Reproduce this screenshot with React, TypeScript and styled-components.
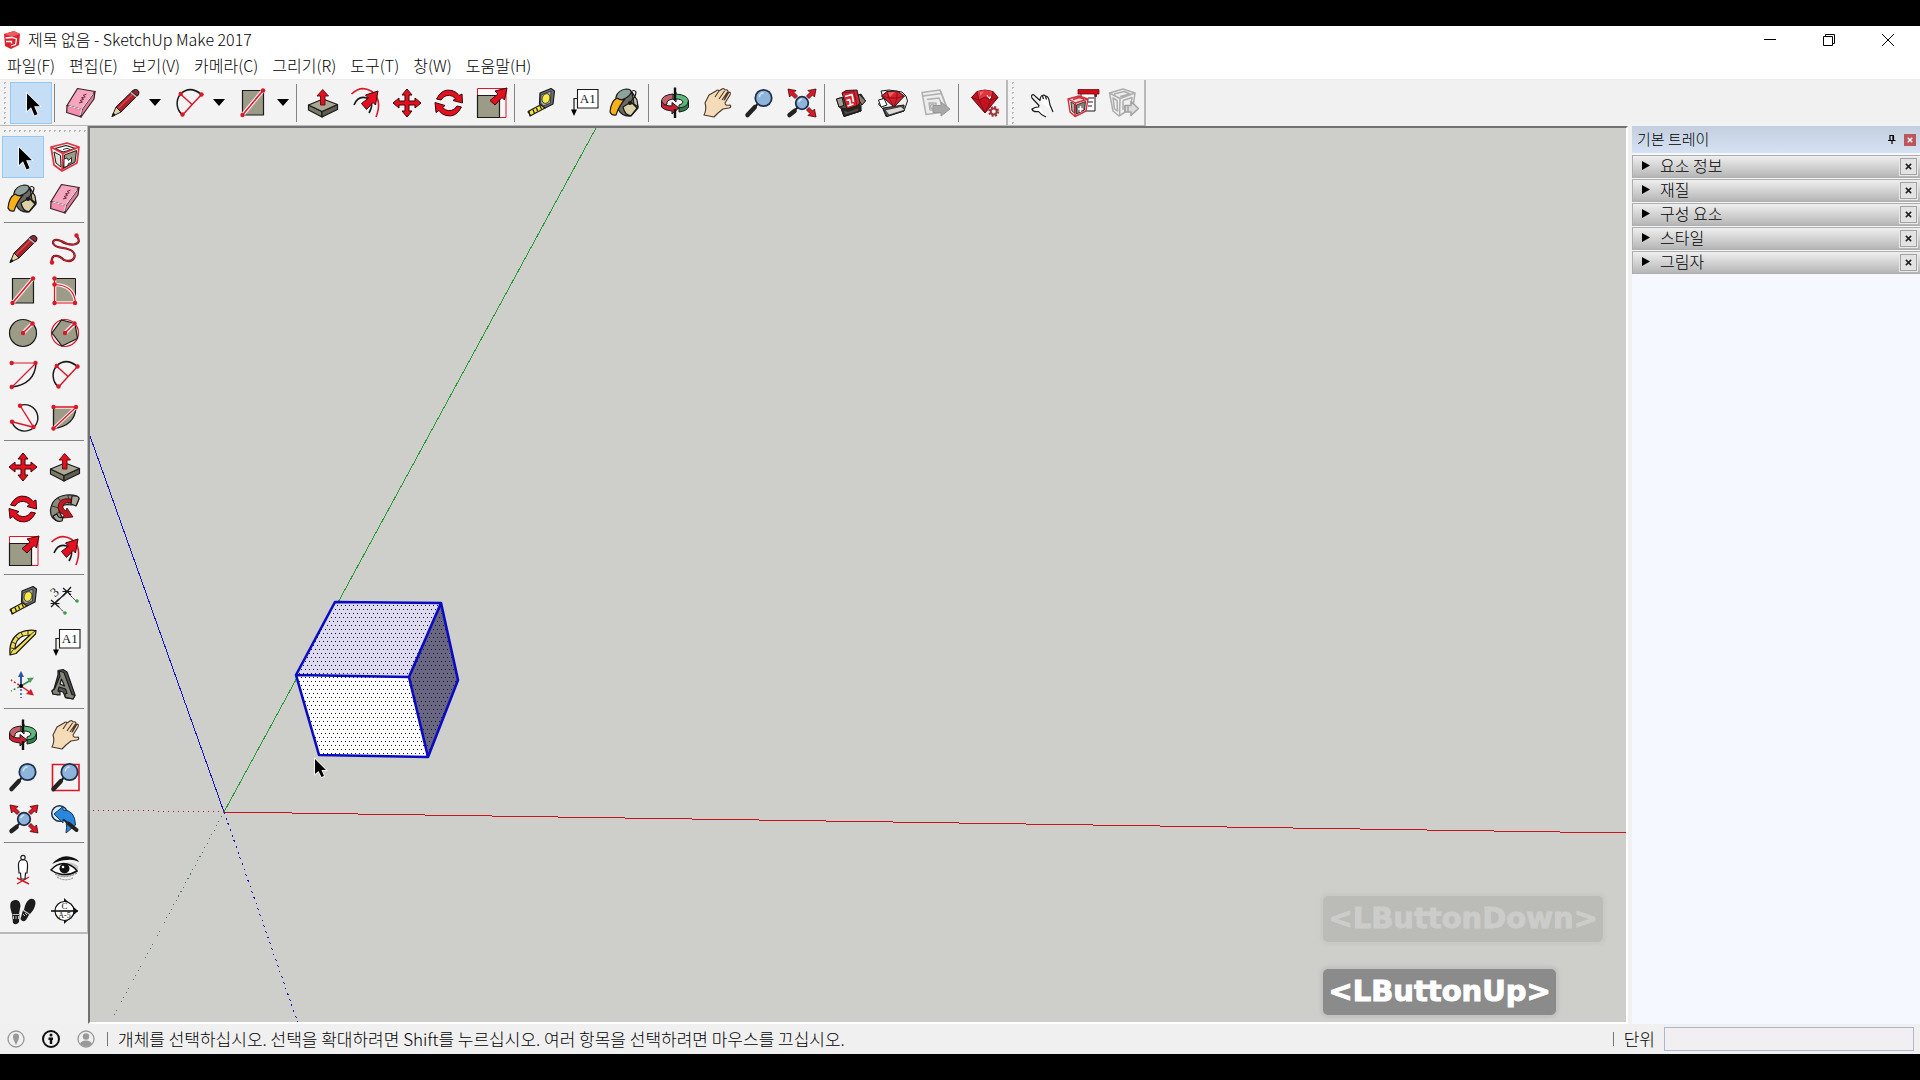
import React from "react";
import styled, { createGlobalStyle, css } from "styled-components";

const GlobalStyle = createGlobalStyle`
  * { box-sizing: border-box; }
  body {
    margin: 0;
    background: #000;
    color: #000;
    font-family: "Noto Sans CJK KR", "Noto Sans", sans-serif;
    font-size: 16px;
    font-weight: 300;
  }
  button, input {
    margin: 0;
    padding: 0;
    border: 0;
    background: none;
    color: inherit;
    font: inherit;
  }
  svg { display: block; }
`;

/* ---------- frame ---------- */

const Screen = styled.div`
  display: flex;
  flex-direction: column;
  height: 100vh;
  padding: 26px 0;
  background: #000;
`;

const Window = styled.div`
  display: flex;
  flex: 1;
  flex-direction: column;
  min-height: 0;
  background: #f1f1f1;
`;

const TitleBar = styled.header`
  display: flex;
  align-items: center;
  height: 28px;
  padding: 0 3px;
  background: #fff;
`;

const Title = styled.h1`
  flex: 1;
  margin: 0;
  padding: 0 0 2px 7px;
  font-size: 16px;
  font-weight: 300;
  line-height: 24px;
`;

const WindowButton = styled.button`
  display: grid;
  place-items: center;
  width: 59px;
  height: 28px;
`;

const MenuBar = styled.nav`
  display: flex;
  align-items: flex-start;
  gap: 14px;
  height: 25px;
  padding-left: 7px;
  background: #fff;
`;

const MenuItem = styled.button`
  line-height: 22px;
  white-space: nowrap;
`;

/* ---------- toolbars ---------- */

const ToolbarRow = styled.div`
  display: flex;
  height: 47px;
  border-top: 1px solid #ececec;
`;

const Toolbar = styled.div`
  display: flex;
  align-items: center;
  border-right: 2px solid #b9b9b9;
  border-bottom: 1px solid #b9b9b9;
  background: #f4f3f4;
`;

const Grip = styled.div<{ $across?: boolean }>`
  ${(p) =>
    p.$across
      ? css`
          height: 8px;
          margin: 0 0 2px 2px;
          background: radial-gradient(circle, #b8b8b8 1px, transparent 1px) 0 2px / 5px 5px repeat-x;
        `
      : css`
          align-self: stretch;
          width: 10px;
          background: radial-gradient(circle, #b8b8b8 1px, transparent 1px) 2px 0 / 5px 5px repeat-y;
        `}
`;

const ToolButton = styled.button<{ $active?: boolean; $split?: boolean }>`
  display: grid;
  place-items: center;
  width: 42px;
  height: 42px;
  padding-left: ${(p) => (p.$split ? 4 : 0)}px;
  border: 1px solid ${(p) => (p.$active ? "#98c8f0" : "transparent")};
  background: ${(p) => (p.$active ? "#c5def5" : "transparent")};
`;

const DropButton = styled.button`
  display: grid;
  place-items: center;
  width: 22px;
  height: 42px;
`;

const Divider = styled.div<{ $across?: boolean }>`
  flex: none;
  background: #858585;
  ${(p) =>
    p.$across
      ? css`
          grid-column: 1 / -1;
          height: 1px;
          margin: 2px 2px 5px;
        `
      : css`
          width: 1px;
          height: 38px;
          margin: 0 5px 0 2px;
        `}
`;

const Workspace = styled.div`
  display: flex;
  flex: 1;
  min-height: 0;
`;

const SideColumn = styled.aside`
  width: 88px;
  flex: none;
`;

const Palette = styled.div`
  border-right: 1px solid #b9b9b9;
  border-bottom: 2px solid #b9b9b9;
  background: #f4f3f4;
`;

const PaletteGrid = styled.div`
  display: grid;
  grid-template-columns: 42px 42px;
  padding-left: 2px;
`;

/* ---------- drawing area ---------- */

const Viewport = styled.main`
  position: relative;
  flex: 1;
  min-width: 0;
  overflow: hidden;
  border: 2px solid;
  border-color: #717171 #fff #fff #717171;
  background: #cececa;
`;

const Scene = styled.svg`
  position: absolute;
  inset: 0;
  width: 100%;
  height: 100%;
`;

const KeyStack = styled.div`
  position: absolute;
  right: 23px;
  bottom: 7px;
  display: flex;
  flex-direction: column;
  align-items: flex-start;
  gap: 27px;
`;

const KeyBadge = styled.div<{ $faded?: boolean }>`
  padding: 0 5px 2px;
  border-radius: 5px;
  background: ${(p) => (p.$faded ? "#bbbbb8" : "#8b8b8b")};
  box-shadow: 0 0 3px 3px ${(p) => (p.$faded ? "#c8c8c6" : "#c2c2c1")};
  color: ${(p) => (p.$faded ? "#cccccb" : "#fff")};
  font-family: "DejaVu Sans", sans-serif;
  font-size: 29px;
  font-weight: 700;
  line-height: 44px;
  white-space: nowrap;
  -webkit-text-stroke: 1px currentColor;
`;

/* ---------- tray ---------- */

const Tray = styled.aside`
  display: flex;
  flex: none;
  flex-direction: column;
  width: 288px;
  margin-left: 4px;
  background: #f5f8ff;
`;

const TrayHeader = styled.div`
  display: flex;
  align-items: center;
  height: 27px;
  margin-bottom: 2px;
  padding: 0 4px 0 5px;
  background: linear-gradient(#c3cfde, #d6e2f3);
`;

const TrayTitle = styled.h2`
  flex: 1;
  margin: 0;
  padding-bottom: 2px;
  font-size: 15px;
  font-weight: 300;
  line-height: 22px;
`;

const PinButton = styled.button`
  margin-right: 8px;
`;

const TrayClose = styled.button`
  display: grid;
  place-items: center;
  width: 12px;
  height: 12px;
  background: #bd565b;
`;

const PanelRow = styled.div`
  display: flex;
  align-items: center;
  height: 23px;
  margin-bottom: 1px;
  padding-right: 3px;
  border: 1px solid #adadad;
  border-right: 0;
  background: linear-gradient(#efefef, #b6b6b6);
`;

const PanelToggle = styled.button`
  display: flex;
  flex: 1;
  align-items: center;
  gap: 10px;
  padding: 0 0 2px 9px;
  line-height: 19px;
  text-align: left;
`;

const PanelClose = styled.button`
  display: grid;
  place-items: center;
  width: 17px;
  height: 17px;
  border: 1px solid #a3a3a3;
  outline: 1px solid #e9e9e9;
  background: #e3e3e3;
`;

/* ---------- status bar ---------- */

const StatusBar = styled.footer`
  display: flex;
  align-items: center;
  height: 30px;
  padding: 0 6px 0 7px;
  background: #f1f0f1;
`;

const StatusIcons = styled.div`
  display: flex;
  gap: 17px;
`;

const Bar = styled.span`
  width: 1px;
  height: 14px;
  margin: 0 10px 0 12px;
  background: #777;
`;

const Hint = styled.p`
  flex: 1;
  margin: 0;
  font-size: 17px;
  line-height: 24px;
  white-space: nowrap;
`;

const UnitLabel = styled.label`
  display: flex;
  align-items: center;
  gap: 9px;
  font-size: 17px;
  line-height: 24px;
`;

const UnitInput = styled.input`
  width: 250px;
  height: 24px;
  border: 1px solid #acb6cc;
  background: #f1eff1;
`;

/* ---------- icons, all on a 32 unit grid ---------- */

const K = "#1a1a1a";
const R = "#d71928";
const STONE = "#9c9b88";

const Dot = ({ x, y }: { x: number; y: number }) => <circle cx={x} cy={y} r="2.2" fill={R} />;

const Lens = ({ x, y, r }: { x: number; y: number; r: number }) => (
  <>
    <path d={`M${x - r * 0.7} ${y + r * 0.7}L4.500 28`} stroke={K} strokeWidth="2" />
    <path d={`M${x - r * 0.7 - 3} ${y + r * 0.7 + 3.500}L4.500 28`} stroke="#222" strokeWidth="4.500" strokeLinecap="round" />
    <circle cx={x} cy={y} r={r} fill="#8fb4dc" stroke="#20304a" strokeWidth="1.800" />
    <path d={`M${x - r * 0.5} ${y - r * 0.1}a${r * 0.5} ${r * 0.5} 0 0 1 ${r * 0.5} ${-r * 0.5}`} stroke="#d3e5fa" fill="none" strokeWidth="1.500" />
  </>
);

const BigArrow = () => (
  <path d="M15.500 12.500L22.500 7L19.500 4L32 0L29.500 14L27 11.500L20.500 18.500Z" fill="#e3101f" stroke="#3a0508" strokeWidth="1" />
);

const icons: Record<string, React.ReactNode> = {
  select: <path d="M12 6.500V24L16 20.200L19.500 28.500L22.600 27.200L19.200 19.200H25Z" fill="#000" stroke="#fff" strokeWidth="1.500" paintOrder="stroke" />,
  component: (
    <g strokeLinejoin="round">
      <path d="M2 6L18 2L30 6L28 22L13 30L5 24Z" fill="#f0eceb" />
      <path d="M15.500 14L27.500 9.500L26 21L14.500 27.500Z" fill={STONE} stroke={K} />
      <path d="M6 7.500L17 4.500L26.500 7.500L14 11Z" fill="#fff" stroke={K} strokeWidth="1.200" />
      <path d="M5 11L11.500 14.500L12 26L7 22Z" fill="#e6e2d8" stroke={K} />
      <path d="M14 8.500l4-1.200 3 1.200M15 18l3-1 1.500 2.500 3-3v5l-3 1-1 2.500-3.500 1.500Z" fill="#fff" stroke={K} strokeWidth=".9" />
      <path d="M2 6L18 2L30 6L28 22L13 30L5 24ZM2 6L14 12.500L30 6M14 12.500L13 30" fill="none" stroke="#e0323f" strokeWidth="1.700" />
    </g>
  ),
  paint: (
    <g stroke={K} strokeWidth="1.200" strokeLinejoin="round">
      <path d="M9 9L20 3Q29 12 29 21L22 29Q13 30 9 22Z" fill="#6a6a63" />
      <path d="M14 20L22 15L28 21L22 28.500Q16 29 14 20Z" fill="#ddd1a8" />
      <path d="M23 5L28 13L29 20L25 17Z" fill="#c9c3a4" />
      <path d="M7 10Q9 3 17 2Q23 2 22 6Q19 12 10 13Q6 13 7 10Z" fill="#8ea19c" />
      <path d="M8 11Q2 14 1 25Q3 29 7 28Q10 19 16 12Q12 14 8 11Z" fill="#f8b11a" />
      <path d="M20 16Q27 10 27 5Q25 2 22 5" fill="none" />
      <circle cx="21" cy="16" r="1.500" fill={K} />
    </g>
  ),
  eraser: (
    <g stroke="#3c2027" strokeWidth="1.200" strokeLinejoin="round">
      <path d="M12.500 1.500L30 4.500L17 22.500L2 18.500Z" fill="#f6a6bf" />
      <path d="M2 18.500L17 22.500L16 30L1.700 25.500Z" fill="#f490ae" />
      <path d="M17 22.500L30 4.500L29 12L16 30Z" fill="#e57f9f" />
      <path d="M3.500 19L16.500 22.300L28 6.500M16.500 22.500L15.700 28" fill="none" stroke="#fff" strokeWidth=".9" />
      <path d="M14 16l3.500-1-2.500-1.500 3.800-1.200-2.300-1.500 3.800-1-2-1.600 3.200-1" fill="none" stroke="#6b2a3f" strokeWidth="1" />
    </g>
  ),
  pencil: (
    <g stroke={K} strokeWidth="1" strokeLinejoin="round">
      <path d="M7 20L24 3.500Q28 2 29.500 5L29 8L12 25Z" fill="#a5222a" />
      <path d="M9 21.500L25.500 5.500" stroke="#d84a4c" strokeWidth="1.300" />
      <path d="M22.500 5L24.500 3Q28.500 1.500 30 5Q30.200 7 28.500 9Z" fill="#8b2a33" />
      <path d="M22 5.500L27.500 10" stroke="#b9b9b9" strokeWidth="1.600" />
      <path d="M7 20L12 25L3 29.500Z" fill="#e5d3a3" />
      <path d="M4.500 26L6 28L3 29.500Z" fill={K} />
    </g>
  ),
  freehand: (
    <>
      <path d="M27.700 3Q33 10 25 11.500Q18 12 12 8Q4 5 4 10Q5 14 14 15Q27 17 25.500 24Q23 30 15 27Q10 22 5 23Q2 25 3 29" fill="none" stroke="#7b1018" strokeWidth="2.200" />
      <path d="M27.700 3Q33 10 25 11.500Q18 12 12 8Q4 5 4 10Q5 14 14 15Q27 17 25.500 24Q23 30 15 27Q10 22 5 23Q2 25 3 29" fill="none" stroke="#d9313c" strokeWidth=".8" />
      <Dot x={27.500} y={2.500} /><Dot x={3} y={29.500} />
    </>
  ),
  rect: (
    <>
      <path d="M5.500 3.500H26.500V28H5.500Z" fill={STONE} stroke={K} strokeWidth="1.200" />
      <path d="M5.500 28L26 3.500" stroke="#fbe9e9" strokeWidth="4" /><path d="M5.500 28L26 3.500" stroke={R} strokeWidth="1.500" />
      <Dot x={5.500} y={28} /><Dot x={26} y={3.500} />
    </>
  ),
  rotrect: (
    <>
      <path d="M5.500 3.500H26.500V28H5.500Z" fill={STONE} stroke={K} strokeWidth="1" />
      <path d="M5.500 3.500V28H26.500Q25 10 5.500 9.500" fill="none" stroke="#fbe9e9" strokeWidth="3.500" />
      <path d="M5.500 3.500V28H26.500Q25 10 5.500 9.500" fill="none" stroke={R} strokeWidth="1.200" />
      <Dot x={5.500} y={3.500} /><Dot x={5.500} y={9.500} /><Dot x={5.500} y={28} /><Dot x={26} y={28} />
    </>
  ),
  circle: (
    <>
      <circle cx="16" cy="16" r="13.500" fill={STONE} stroke={K} strokeWidth="1.200" />
      <path d="M16 16L25.500 6.500" stroke="#fbe9e9" strokeWidth="4" /><path d="M16 16L25.500 6.500" stroke={R} strokeWidth="1.500" />
      <Dot x={16} y={16} /><Dot x={25.500} y={6.500} />
    </>
  ),
  polygon: (
    <>
      <circle cx="16" cy="16" r="13.500" fill="#f8eeee" stroke={R} strokeWidth="1.200" />
      <path d="M12.500 3L26 6.500L28.500 21.500L13 29L3 16Z" fill={STONE} stroke={K} strokeWidth="1.200" />
      <path d="M16 16L25.500 6.500" stroke="#fbe9e9" strokeWidth="4" /><path d="M16 16L25.500 6.500" stroke={R} strokeWidth="1.500" />
      <Dot x={16} y={16} /><Dot x={25.500} y={6.500} />
    </>
  ),
  arc: (
    <>
      <path d="M29 4Q28 25 5 28" fill="none" stroke={K} strokeWidth="1.500" />
      <path d="M5 4H29L5 28" fill="none" stroke={R} strokeWidth="1.200" />
      <Dot x={4.700} y={4} /><Dot x={28.500} y={4} /><Dot x={4.700} y={28} />
    </>
  ),
  arc2: (
    <>
      <path d="M9.500 28A15 15 0 0 1 7.500 7Q17 -2 28.500 7.500" fill="none" stroke={K} strokeWidth="1.500" />
      <path d="M28.500 7.500L9.500 28M7.500 7L19 17.500" fill="none" stroke={R} strokeWidth="1.500" />
      <Dot x={7.700} y={7} /><Dot x={28.500} y={7.500} /><Dot x={9.500} y={27.500} />
    </>
  ),
  arc3: (
    <>
      <path d="M13 4.500A13.200 13.200 0 1 1 5 20.700" fill="none" stroke={K} strokeWidth="1.400" />
      <path d="M13 4.500L26.700 26.300L5 20.700" fill="none" stroke={R} strokeWidth="1.400" />
      <Dot x={13} y={4.700} /><Dot x={5} y={20.700} /><Dot x={26.500} y={26} />
    </>
  ),
  pie: (
    <>
      <path d="M4.500 6H27Q26 25 4.500 27.500Z" fill={STONE} stroke={K} strokeWidth="1.300" />
      <path d="M4.500 27.500L27.300 6H4.500" fill="none" stroke="#fbe9e9" strokeWidth="3.500" />
      <path d="M4.500 27.500L27.300 6H4.500" fill="none" stroke={R} strokeWidth="1.300" />
      <Dot x={4.500} y={6} /><Dot x={27} y={6} /><Dot x={4.500} y={27.500} />
    </>
  ),
  move: (
    <path d="M16 2L21 8H18V14H24V11L30 16L24 21V18H18V24H21L16 30L11 24H14V18H8V21L2 16L8 11V14H14V8H11Z" fill="#e3101f" stroke="#3a0508" strokeWidth="1" />
  ),
  pushpull: (
    <g strokeLinejoin="round" stroke={K} strokeWidth="1.200">
      <path d="M1.500 18L15 24.500V30L1.500 23Z" fill="#7c7b6a" />
      <path d="M15 24.500L30.500 17.500V22.500L15 30Z" fill="#5f5e51" />
      <path d="M1.500 18L16 12L30.500 17.500L15 24.500Z" fill="#a9a894" />
      <path d="M13.500 18V9H10L15.700 2.500L21.500 9H18V18Z" fill="#e3101f" stroke="#5a0a0e" strokeWidth=".9" />
    </g>
  ),
  rotate: (
    <g fill="#e3101f" stroke="#3a0508" strokeWidth="1">
      <path d="M3.500 12Q9 1 19 3.500Q24 5 26 8.500L29 7L29.500 16L20 13.500L22.500 11.500Q17 6 10.500 10L8 13Z" />
      <path d="M28.500 20Q23 31 13 28.500Q8 27 6 23.500L3 25.500L2 15.500L12 18.500L9.500 20.500Q15 26 21.500 22L24 19Z" />
    </g>
  ),
  followme: (
    <g stroke={K} strokeWidth="1.200" strokeLinejoin="round">
      <path d="M10 28Q1 27 1.500 17Q3 4 17 2Q27 1 30 5L28 11L22 12Q12 10 10 18L13 24Z" fill="#8b8a7d" />
      <path d="M4 23L10 19M3 13L10 15M9 5L14 11M19 2L20 11" strokeWidth=".8" />
      <path d="M23 3Q30 2 30 6L27 13L22 11Z" fill="#aaa99a" />
      <path d="M22 6Q9 4 9 15Q10 20 15 22L14 25L24 24L18 15L17 18Q12 15 15 11Q18 8 22 10Z" fill="#c01822" stroke="#4a0508" strokeWidth=".8" />
      <path d="M4 23Q7 30 13 28L14 24Q9 26 8 21Z" fill="#aaa99a" />
    </g>
  ),
  scale: (
    <>
      <path d="M2.500 1.500H31V30.500H2.500Z" fill="#fdf7f7" stroke={R} strokeWidth="1" />
      <path d="M2.500 8.500H24.500V30.500H2.500Z" fill={STONE} stroke={K} strokeWidth="1.200" />
      <path d="M15 13.500L23 7L20 4L32 1L29.500 13L27 10.500L20 18Z" fill="#e3101f" stroke="#3a0508" strokeWidth="1" />
    </>
  ),
  offset: (
    <>
      <path d="M2.500 7Q12 -2 22 4Q34 12 27 30" fill="none" stroke={R} strokeWidth="1.600" />
      <path d="M5 18Q9 8 18 11Q26 16 20 26" fill="none" stroke={K} strokeWidth="1.600" />
      <g transform="translate(-3 4)"><BigArrow /></g>
    </>
  ),
  tape: (
    <g stroke={K} strokeWidth="1.200" strokeLinejoin="round">
      <path d="M4 24L17 17L20 21L5 29Z" fill="#f6e43a" />
      <path d="M8 22.500l1.500 4M11.500 21l1 3M15 19l1.500 3M4 24l-1 1 3 4" />
      <path d="M15 6L26 1.500L29.500 4L28 17L20 21L14.500 17Z" fill="#6f6f72" />
      <path d="M16 8L26 4L25.500 16L18.500 19L15.500 16Z" fill="#a7a7a5" strokeWidth=".7" />
      <ellipse cx="21" cy="11.500" rx="3.800" ry="5" fill="#f7ec45" transform="rotate(20 21 11.500)" strokeWidth=".7" />
    </g>
  ),
  dimension: (
    <>
      <path d="M6 18L18 7" stroke={K} strokeWidth="1.200" />
      <path d="M2 15L10 22M10 14L2 22M14 3L22 10M22 2L14 11" stroke={K} strokeWidth="1.300" />
      <path d="M1.500 18.500H10.500M13.500 6.500H22.500" stroke={K} strokeWidth="1" />
      <path d="M8 20L15.500 28M20 9L27 16" stroke={K} strokeWidth="1" strokeDasharray="2 1" />
      <circle cx="16" cy="28" r="1.800" fill="#3ba146" /><circle cx="28" cy="16" r="1.800" fill="#3ba146" />
      <text x="4" y="11" fontFamily="Liberation Serif, serif" fontSize="13" transform="rotate(-42 7 9)" fill={K}>3</text>
    </>
  ),
  protractor: (
    <g stroke={K} strokeWidth="1.200" strokeLinejoin="round">
      <path d="M3 28Q1.500 13 12 6Q20 2 29 3.500L28.500 7L9 26.500Z" fill="#f2df57" />
      <path d="M8 22Q8 13 15 9.500Q19 8 23 8Z" fill="#f4f3f4" />
      <path d="M3.500 21l4 .5M5 15l4 2M9 9.500l3 3M14 5.500l2 3.500M21 4v3.500" strokeWidth=".9" />
      <path d="M3 28L5 24L26 5.500L29 3.500" fill="none" strokeWidth=".8" />
    </g>
  ),
  text: (
    <>
      <path d="M10.500 2.500H31V21H10.500Z" fill="#fff" stroke={K} strokeWidth="1.100" />
      <text x="20.700" y="16" textAnchor="middle" fontFamily="Liberation Serif, serif" fontSize="13" fontWeight="400" fill={K}>A1</text>
      <path d="M10 11.500H7V24" fill="none" stroke={K} strokeWidth="1.200" /><path d="M4 22.500H10L7 29Z" fill="#000" />
    </>
  ),
  axes: (
    <>
      <path d="M14 17V6" stroke="#2855a5" strokeWidth="2" /><path d="M11 8L14 2L17 8Z" fill="#2855a5" />
      <path d="M14 17L24 11" stroke="#388a46" strokeWidth="1.500" /><path d="M20 9L27 8.500L23 14Z" fill="#4b9c55" />
      <path d="M14 17L24 24" stroke={R} strokeWidth="1.500" /><path d="M24 20L27 26.500L19 25Z" fill={R} />
      <path d="M14 20V29" stroke="#2855a5" strokeWidth="1.500" strokeDasharray="2 2" />
      <path d="M12 18L4 22" stroke="#388a46" strokeWidth="1.500" strokeDasharray="2 2" />
      <path d="M12 16L4 11" stroke={R} strokeWidth="1.500" strokeDasharray="2 2" />
      <circle cx="14" cy="17" r="2" fill="#000" />
    </>
  ),
  text3d: (
    <g stroke={K} strokeWidth="1.200" strokeLinejoin="round">
      <path d="M9 1.500L14 .5L18 3L26 26L24 30L17 29L14 23L10 22L9 26L4 25L3 22L5 20L9 6Z" fill="#55564f" />
      <path d="M10 2L15 3.500L23 25.500L26 26.500L24 30L16 28V25L18 24.500L16.500 20L10 18L9 22L11 23V26L4 25L3 22L5.500 20L11 7Z" fill="#85867b" />
      <path d="M12.500 10L15.500 17L11 15Z" fill="#f4f3f4" />
    </g>
  ),
  orbit: (
    <g stroke={K} strokeWidth="1" strokeLinejoin="round">
      <path d="M17 7Q29 8 29.500 14Q29 21 20 22L20 18Q24 17 24 15Q23 12 17 12L17 15L12 10L17 5Z" fill="#5eb77c" />
      <path d="M29.500 14V20Q28 24 20 25V21Q29 20 29.500 14Z" fill="#2b7d4a" />
      <path d="M14 7Q3 8 2.500 14V20L8 17Q7 13 14 12Z" fill="#c5606b" />
      <path d="M2.500 14Q4 19 13 19V15.500L20 21L13 27V24Q3 23 2.500 19Z" fill="#c91f30" />
      <path d="M16 .5V13M16 22V31" stroke="#111" strokeWidth="2.400" />
    </g>
  ),
  hand: (
    <path d="M3 28Q6 22 4 16L8 8L15 4Q17 2 18 4L21 2Q23 1 24 3Q27 2 27 5L23 13L24 12L28 5Q30 5 29 8L24 16Q24 19 29 18Q31 20 28 21L22 22L17 26L13 30Z M14 10L18 4M18 12L23.500 4M21 13L26.500 5" fill="#f4dcb8" stroke="#4a3728" strokeWidth="1.100" strokeLinejoin="round" />
  ),
  zoom: <Lens x={20.500} y={11} r={8.200} />,
  zoomwindow: (
    <>
      <path d="M3.500 3.500H30V29.500H3.500Z" fill="none" stroke={R} strokeWidth="1.600" />
      <Lens x={20.500} y={11} r={8.200} />
    </>
  ),
  extents: (
    <>
      <Lens x={17} y={16} r={6.300} />
      <g fill="#d71928" stroke="#4a0508" strokeWidth=".8">
        <path d="M3 2L11 3.500L9 5.500L12.500 9L10 11.500L6.500 8L4.500 10Z" />
        <path d="M31 2L23 3.500L25 5.500L21.500 9L24 11.500L27.500 8L29.500 10Z" />
        <path d="M31 30L23 28.500L25 26.500L21.500 23L24 20.500L27.500 24L29.500 22Z" />
      </g>
    </>
  ),
  previous: (
    <>
      <circle cx="10.500" cy="10.500" r="7.800" fill="#dcebf8" stroke="#20304a" strokeWidth="1.500" />
      <path d="M5 11L14 3.500V7Q26 7 26.500 22L17 30Q19 17 14 16V20Z" fill="#2b87dd" stroke="#12365f" strokeWidth="1" />
      <path d="M15 17L20 21" stroke="#222" strokeWidth="1.800" />
      <path d="M19.500 20.500L27.500 27" stroke="#222" strokeWidth="4" strokeLinecap="round" />
    </>
  ),
  position: (
    <>
      <path d="M10 31L22 24M10 25L22 31" stroke={R} strokeWidth="1.400" />
      <circle cx="16" cy="4.500" r="2.200" fill="#fff" stroke={K} strokeWidth="1.200" />
      <path d="M14 7Q11 8 11.500 14L12 20H13.500L14 26H18L18.500 20H20L20.500 14Q21 8 18 7Z" fill="#fff" stroke={K} strokeWidth="1.200" />
    </>
  ),
  look: (
    <>
      <path d="M4 18Q10 28 26 21Q30 20 29 13Q22 7 12 11Z" fill="#c9c9c9" />
      <path d="M3 11Q12 1 22 4Q29 6 30 9Q24 6 18 7Q11 7 3 11Z" fill="#111" />
      <path d="M2 17Q9 9 18 11Q25 13 28 18Q20 23 11 21Q6 20 2 17Z" fill="#fff" stroke="#111" strokeWidth="1.500" />
      <circle cx="15.500" cy="15.500" r="5" fill="#111" /><circle cx="14" cy="14" r="1.300" fill="#fff" />
      <path d="M6 21Q16 27 28 20M8 24Q16 29 24 25" fill="none" stroke="#777" strokeDasharray="2 1" />
    </>
  ),
  walk: (
    <g fill="#1c1c1c">
      <path d="M8 5Q13 4 13.500 11L12 19L5 19Q2 10 4 7Q6 5 8 5ZM5 19H12.500L12 27Q9 31 6 28Z" />
      <path d="M23 4Q28 3 28.500 8Q28 14 23 19L17 15Q18 7 23 4ZM16 15L22.500 19L19 25Q16 28 13.500 24Z" />
      <path d="M5.500 19.500h7M6.500 21v3M9 21v3M11.500 21v3M16 15.500l6.500 3.800M16 19l2 2M18 18l2 2" stroke="#eee" strokeWidth=".8" />
    </g>
  ),
  section: (
    <>
      <path d="M15 3L29 16L15 29Z" fill="#111" />
      <circle cx="15.500" cy="16" r="9.500" fill="#fff" stroke="#111" strokeWidth="1.200" />
      <path d="M2 16H29" stroke="#111" strokeWidth="1.600" />
      <text x="15.500" y="14" textAnchor="middle" fontFamily="Liberation Serif, serif" fontSize="9" fontWeight="400" fill="#111">C</text>
      <text x="15.500" y="23" textAnchor="middle" fontFamily="Liberation Serif, serif" fontSize="8" fontWeight="400" fill="#111">A-5</text>
    </>
  ),
  warehouse: (
    <g stroke={K} strokeWidth="1" strokeLinejoin="round">
      <path d="M5 11L1.500 12L4 20L6 21L9 29.500L26 24V18L30.500 14L26 7L22 9Z" fill="#5d504b" />
      <path d="M1.500 12L7 10.500L9 18.500L4 20Z" fill="#a59c96" />
      <path d="M24 7L30.500 14L27 18L23 12Z" fill="#8b7c75" />
      <path d="M7 6L11 3.500L22 3L25 16L22 19L12 22Z" fill="#d7202d" />
      <path d="M7 6L19 4.500L22 19" fill="none" stroke="#7b0d15" strokeWidth=".8" />
      <path d="M10 9.500L17 7.500L18.500 15M11.500 13.500L14.500 12.500L15.500 17M12.500 19L18.500 17" fill="none" stroke="#fff" strokeWidth="1.700" />
      <path d="M6 21L12 22L25 18L26 24L9 29.500Z" fill="#2c2625" />
      <path d="M8 23L13 24.500L23 21L24 24L10 28Z" fill="#574643" strokeWidth=".6" />
    </g>
  ),
  extension: (
    <g stroke={K} strokeWidth="1" strokeLinejoin="round">
      <path d="M6 11L4 4L12 3L25 5L29 9L30.500 14L27 24L9 29.500L6 22L1.500 17Z" fill="#f1efee" />
      <path d="M1.500 13L7 11.500L10 18L4 20Z" fill="#fff" />
      <path d="M6 21L13 20L27 18V24L10 29.500Z" fill="#5b5654" />
      <path d="M8 23L24 19.500L28 23L12 28Z" fill="#dcd9d7" strokeWidth=".7" />
      <path d="M4.500 9L10 4.500L20 4L27.500 9L17 20Z" fill="#d7202d" />
      <path d="M4.500 9L12 11L20 11L27.500 9M10 4.500L12 11L17 20L20 11L20 4" fill="none" stroke="#7b0d15" strokeWidth=".8" />
      <path d="M11 5.500L18 5L13 10Z" fill="#ef6168" stroke="none" />
    </g>
  ),
  share: (
    <g stroke="#b0b0b0" strokeWidth="1.500" strokeLinejoin="round">
      <path d="M3 5.500L21 3L28 21L25 25L7 27.500Z" fill="#ededed" />
      <path d="M4 9L22.500 6.500M21 3L22.500 6.500L28 21M8 12.500L20 11L23 18M10 16h7v7h-6Z" fill="none" />
      <circle cx="13.500" cy="19.500" r="2" />
      <path d="M14 18.500H22V15L31 22L22 29V25.500H14Z" fill="#a8a8a8" stroke="#969696" strokeWidth="1" />
    </g>
  ),
  ruby: (
    <>
      <path d="M2.500 10.500L8 4.500Q16 1.500 24 4.500L29 10.500L16 26Z" fill="#c5121f" stroke="#5a060c" strokeWidth="1" />
      <path d="M8 4.500Q16 1.500 24 4.500L22 13L16 10L10 13Z" fill="#e03640" />
      <path d="M2.500 10.500L10 13L16 10L22 13L29 10.500M8 4.500L10 13L16 26L22 13L24 4.500" fill="none" stroke="#7b0d15" strokeWidth=".9" />
      <path d="M11 5L15 4.500L11 9Z" fill="#f07078" />
      <path d="M18 8l1.500 2.500 2.500-.5-2 2" fill="none" stroke="#fff" strokeWidth="1" />
      <circle cx="24.700" cy="24.500" r="4.500" stroke="#a0333c" strokeWidth="2" strokeDasharray="2 1.530" />
      <circle cx="24.700" cy="24.500" r="3" fill="#f4f3f4" stroke="#a0333c" strokeWidth="2" />
    </>
  ),
  interact: (
    <path d="M9 8Q10.500 7 12.500 9.500L17 13.500Q17.500 8.500 19.500 8.500Q21 7.500 22.500 9Q25 9 26 13L27 18L30 25M23 30Q18 28 15.500 24.500Q10 25.500 9 22Q12 20 15.500 20L16 18.500L9 11Q8 9 9 8M19.500 9L20.500 12M22.500 9.500L23.500 12.500" stroke={K} fill="#fff" strokeWidth="1.200" strokeLinejoin="round" />
  ),
  options: (
    <g strokeLinejoin="round">
      <path d="M16 5H30V24H16Z" fill="#fff" stroke={K} /><path d="M13 2.500H34V7H31.500V9.500H30V7H13Z" fill="#c8101c" stroke="#7a060c" strokeWidth=".8" />
      <path d="M23 11h6M23 15h5M23 19h4" stroke={K} strokeWidth="1.200" />
      <path d="M3 12L14 9L23 12L21 24L10 29.500L5 25Z" fill="#eadede" />
      <path d="M11.500 18L20.500 14.500L19.500 23L11.500 27Z" fill="#8a7f78" stroke={K} strokeWidth=".8" />
      <path d="M6 15L9.500 17V26L7 24Z" fill="#b7aba5" stroke={K} strokeWidth=".8" />
      <path d="M3 12L14 9L23 12L21 24L10 29.500L5 25ZM3 12L10.500 16L23 12M10.500 16L10 29.500M8 12.500L14.500 10.500L19 12" fill="none" stroke="#d5303c" strokeWidth="1.400" />
      <path d="M13 22h5M15.500 19v6" stroke="#fff" strokeWidth="1.500" />
    </g>
  ),
  attributes: (
    <g stroke="#adadad" strokeWidth="1.500" strokeLinejoin="round">
      <path d="M2.500 6L16 2L28 6L26 20L12 29L6 24Z" fill="#efefef" />
      <path d="M2.500 6L13 11.500L28 6M13 11.500L12.500 29M7 7L17 4.500L23 7L13 9.500M6 11L10 13.500L10.500 24L7.500 22ZM16 13.500L25 10.500L24 17M16 13.500V23" fill="none" />
      <path d="M18 18.500H24V14.500L31.500 21.500L24 28.500V25H18Z" fill="#dcdcdc" stroke="#a2a2a2" />
      <path d="M18 18.500V25M21 18.500V25" stroke="#a2a2a2" />
    </g>
  ),
};

const Icon = ({ name }: { name: string }) => (
  <svg width="32" height="32" viewBox="0 0 32 32" fill="none" overflow="visible" aria-hidden="true">
    {icons[name]}
  </svg>
);

const Tool = ({ name, active, split }: { name: string; active?: boolean; split?: boolean }) => (
  <ToolButton type="button" aria-label={name} $active={active} $split={split}>
    <Icon name={name} />
  </ToolButton>
);

const MenuTool = ({ name }: { name: string }) => (
  <>
    <Tool name={name} split />
    <DropButton type="button" aria-label={`${name} menu`}>
      <svg width="12" height="7" viewBox="0 0 12 7" aria-hidden="true"><path d="M0 0H12L6 7Z" fill="#000" /></svg>
    </DropButton>
  </>
);

const Cross = ({ size, color }: { size: number; color: string }) => (
  <svg width={size} height={size} viewBox="0 0 8 8" aria-hidden="true">
    <path d="M1 1L7 7M7 1L1 7" stroke={color} strokeWidth="1.800" />
  </svg>
);

/* ---------- content ---------- */

const menus = ["파일(F)", "편집(E)", "보기(V)", "카메라(C)", "그리기(R)", "도구(T)", "창(W)", "도움말(H)"];

const toolGroups = [
  ["pushpull", "offset", "move", "rotate", "scale"],
  ["tape", "text", "paint"],
  ["orbit", "hand", "zoom", "extents"],
  ["warehouse", "extension", "share"],
  ["ruby"],
];

const paletteGroups = [
  ["select", "component", "paint", "eraser"],
  ["pencil", "freehand", "rect", "rotrect", "circle", "polygon", "arc", "arc2", "arc3", "pie"],
  ["move", "pushpull", "rotate", "followme", "scale", "offset"],
  ["tape", "dimension", "protractor", "text", "axes", "text3d"],
  ["orbit", "hand", "zoom", "zoomwindow", "extents", "previous"],
  ["position", "look", "walk", "section"],
];

const panels = ["요소 정보", "재질", "구성 요소", "스타일", "그림자"];

const Model = () => (
  <Scene aria-label="3D model">
    <defs>
      <pattern id="dots" width="4" height="8" patternUnits="userSpaceOnUse">
        <path d="M1 1h1v1h-1zM3 5h1v1h-1z" fill="#10103a" shapeRendering="crispEdges" />
      </pattern>
    </defs>
    <g fill="none" strokeWidth="1" shapeRendering="crispEdges">
      <path d="M134 684L506 0" stroke="#2a9a35" />
      <path d="M134 684L0 308" stroke="#1414c0" />
      <path d="M134 684L1537 705" stroke="#c8141e" />
      <path d="M134 684L0 682" stroke="#c8141e" strokeDasharray="1 4" />
      <path d="M134 684L20 895" stroke="#4b7c4b" strokeDasharray="1 4" />
      <path d="M134 684L208 895" stroke="#1414c0" strokeDasharray="2 4" />
    </g>
    <path d="M245 474L351 475L319 549L206 547Z" fill="#dcdaec" />
    <path d="M206 547L319 549L338 629L229 627Z" fill="#fff" />
    <path d="M351 475L368 552L338 629L319 549Z" fill="#6a6880" />
    <path d="M245 474L351 475L368 552L338 629L229 627L206 547Z" fill="url(#dots)" />
    <path d="M245 474L351 475L368 552L338 629L229 627L206 547ZM206 547L319 549L351 475M319 549L338 629" fill="none" stroke="#0b0bc4" strokeWidth="2.600" strokeLinejoin="round" />
    <path d="M225 631V646L228.500 643L231.500 649L234 648L231.500 642H236Z" fill="#000" stroke="#fff" strokeWidth="1.500" paintOrder="stroke" />
  </Scene>
);

const StatusGlyph = ({ color, children }: { color: string; children: React.ReactNode }) => (
  <svg width="18" height="18" viewBox="0 0 18 18" fill={color} aria-hidden="true">
    <circle cx="9" cy="9" r="8" fill="none" stroke={color} strokeWidth={color === "#111" ? 2 : 1.3} />
    {children}
  </svg>
);

export default function App() {
  return (
    <Screen>
      <GlobalStyle />
      <Window>
        <TitleBar>
          <svg width="18" height="18" viewBox="0 0 18 18" aria-hidden="true">
            <path d="M1 3L11 0L17 3L16 14L8 18L2 15Z" fill="#d9222d" />
            <path d="M1 3L11 0L17 3L9 6Z" fill="#ef5a60" />
            <path d="M2.500 7L9 6.500L13.500 8L12.500 13.500L8 15M3 10.500L8.500 10.500V12.500" fill="none" stroke="#fff" strokeWidth="1.300" />
          </svg>
          <Title>제목 없음 - SketchUp Make 2017</Title>
          <WindowButton type="button" aria-label="Minimize">
            <svg width="12" height="12"><path d="M0 5.500H12" stroke="#000" /></svg>
          </WindowButton>
          <WindowButton type="button" aria-label="Restore">
            <svg width="12" height="12" fill="none" stroke="#000"><path d="M.5 2.500H9.500V11.500H.5ZM2.500 2.500V.5H11.500V9.500H9.500" /></svg>
          </WindowButton>
          <WindowButton type="button" aria-label="Close">
            <svg width="12" height="12" stroke="#000"><path d="M0 0L12 12M12 0L0 12" /></svg>
          </WindowButton>
        </TitleBar>
        <MenuBar>
          {menus.map((m) => <MenuItem key={m} type="button">{m}</MenuItem>)}
        </MenuBar>
        <ToolbarRow>
          <Toolbar>
            <Grip />
            <Tool name="select" active />
            <Divider />
            <Tool name="eraser" />
            <MenuTool name="pencil" />
            <MenuTool name="arc2" />
            <MenuTool name="rect" />
            {toolGroups.map((group) => (
              <React.Fragment key={group[0]}>
                <Divider />
                {group.map((name) => <Tool key={name} name={name} />)}
              </React.Fragment>
            ))}
          </Toolbar>
          <Toolbar>
            <Grip />
            <Tool name="interact" />
            <Tool name="options" />
            <Tool name="attributes" />
          </Toolbar>
        </ToolbarRow>
        <Workspace>
          <SideColumn>
            <Palette>
              <Grip $across />
              <PaletteGrid>
                {paletteGroups.map((group, i) => (
                  <React.Fragment key={group[0]}>
                    {i > 0 && <Divider $across />}
                    {group.map((name) => <Tool key={name} name={name} active={name === "select"} />)}
                  </React.Fragment>
                ))}
              </PaletteGrid>
            </Palette>
          </SideColumn>
          <Viewport>
            <Model />
            <KeyStack>
              <KeyBadge $faded>&lt;LButtonDown&gt;</KeyBadge>
              <KeyBadge>&lt;LButtonUp&gt;</KeyBadge>
            </KeyStack>
          </Viewport>
          <Tray>
            <TrayHeader>
              <TrayTitle>기본 트레이</TrayTitle>
              <PinButton type="button" aria-label="Pin">
                <svg width="8" height="9" viewBox="0 0 8 9"><path d="M2 5V.500H5.500V5M0 5.500H7.500M4 5.500V9M5 1V5" fill="none" stroke="#000" strokeWidth="1.200" /></svg>
              </PinButton>
              <TrayClose type="button" aria-label="Close tray"><Cross size={6} color="#fff" /></TrayClose>
            </TrayHeader>
            {panels.map((p) => (
              <PanelRow key={p}>
                <PanelToggle type="button" aria-expanded="false">
                  <svg width="8" height="9" viewBox="0 0 8 9" aria-hidden="true"><path d="M0 0L8 4.500L0 9Z" fill="#000" /></svg>
                  {p}
                </PanelToggle>
                <PanelClose type="button" aria-label={`${p} close`}><Cross size={7} color="#222" /></PanelClose>
              </PanelRow>
            ))}
          </Tray>
        </Workspace>
        <StatusBar>
          <StatusIcons>
            <StatusGlyph color="#999"><path d="M9 15Q5.500 8 6 6.500A3 3 0 0 1 12 6.500Q12.500 8 9 15Z" /></StatusGlyph>
            <StatusGlyph color="#111"><circle cx="9" cy="5" r="1.500" /><path d="M6.500 7.500H11V10H10.200V14H7.800V10H6.500Z" /></StatusGlyph>
            <StatusGlyph color="#999"><circle cx="9" cy="6.500" r="3.200" /><path d="M3 14Q4 10.500 9 10.500T15 14Q9 19 3 14Z" /></StatusGlyph>
          </StatusIcons>
          <Bar />
          <Hint>개체를 선택하십시오. 선택을 확대하려면 Shift를 누르십시오. 여러 항목을 선택하려면 마우스를 끄십시오.</Hint>
          <Bar />
          <UnitLabel>단위<UnitInput type="text" /></UnitLabel>
        </StatusBar>
      </Window>
    </Screen>
  );
}
